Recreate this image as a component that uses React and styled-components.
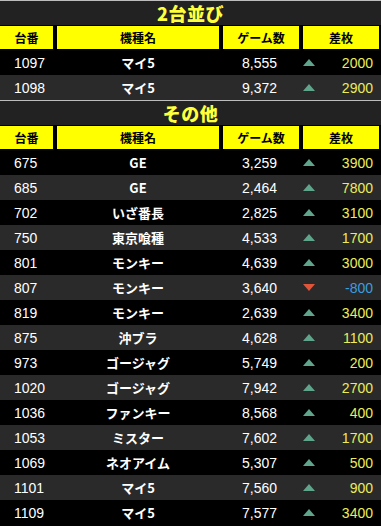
import React from "react";
import styled, { createGlobalStyle } from "styled-components";

const Global = createGlobalStyle`
  html, body {
    margin: 0;
    padding: 0;
    background: #000;
  }
  body {
    font-family: "Liberation Sans", "Noto Sans CJK JP", sans-serif;
  }
`;

const Board = styled.div`
  width: 381px;
  background: #000;
`;

const Title = styled.div`
  height: 25px;
  box-sizing: border-box;
  border-top: 1px solid #bdbdbd;
  background: #222;
  display: flex;
  align-items: center;
  justify-content: center;
  color: #ffff3c;
  font-family: "Noto Sans CJK JP", sans-serif;
  font-weight: 900;
  font-size: 18px;
  letter-spacing: 0.5px;
`;

const cols = "53px 162px 76px 76px";

const HeadRow = styled.div`
  display: grid;
  grid-template-columns: ${cols};
  column-gap: 4px;
  height: 25px;
  box-sizing: border-box;
  padding: 1px 0;
  background: #000;
`;

const HeadCell = styled.div`
  background: #ffff00;
  color: #000;
  display: flex;
  align-items: center;
  justify-content: center;
  font-family: "Noto Sans CJK JP", sans-serif;
  font-weight: 700;
  font-size: 12px;
`;

const Row = styled.div`
  display: grid;
  grid-template-columns: ${cols};
  column-gap: 4px;
  height: 25px;
  align-items: center;
  background: ${(p) => (p.$odd ? "#2a2a2a" : "#000")};
  color: #fff;
  font-size: 14px;
`;

const Num = styled.div`
  padding-left: 14px;
`;

const Name = styled.div`
  text-align: center;
  font-family: "Noto Sans CJK JP", sans-serif;
  font-weight: 700;
  font-size: 13px;
`;

const Games = styled.div`
  text-align: right;
  padding-right: 22px;
`;

const Diff = styled.div`
  display: flex;
  align-items: center;
  justify-content: space-between;
  padding: 0 6px 0 0;
  color: ${(p) => (p.$neg ? "#3a9ee0" : "#ecec5a")};
`;

const Arrow = ({ down }) =>
  down ? (
    <svg width="12" height="7" viewBox="0 0 12 7">
      <polygon points="0,0 12,0 6,7" fill="#e0553a" />
    </svg>
  ) : (
    <svg width="12" height="7" viewBox="0 0 12 7">
      <polygon points="0,7 12,7 6,0" fill="#5fa58c" />
    </svg>
  );

const sections = [
  {
    title: "2台並び",
    rows: [
      ["1097", "マイ5", "8,555", 2000],
      ["1098", "マイ5", "9,372", 2900],
    ],
  },
  {
    title: "その他",
    rows: [
      ["675", "GE", "3,259", 3900],
      ["685", "GE", "2,464", 7800],
      ["702", "いざ番長", "2,825", 3100],
      ["750", "東京喰種", "4,533", 1700],
      ["801", "モンキー", "4,639", 3000],
      ["807", "モンキー", "3,640", -800],
      ["819", "モンキー", "2,639", 3400],
      ["875", "沖ブラ", "4,628", 1100],
      ["973", "ゴージャグ", "5,749", 200],
      ["1020", "ゴージャグ", "7,942", 2700],
      ["1036", "ファンキー", "8,568", 400],
      ["1053", "ミスター", "7,602", 1700],
      ["1069", "ネオアイム", "5,307", 500],
      ["1101", "マイ5", "7,560", 900],
      ["1109", "マイ5", "7,577", 3400],
    ],
  },
];

export default function App() {
  return (
    <Board>
      <Global />
      {sections.map((s) => (
        <React.Fragment key={s.title}>
          <Title>{s.title}</Title>
          <HeadRow>
            <HeadCell>台番</HeadCell>
            <HeadCell>機種名</HeadCell>
            <HeadCell>ゲーム数</HeadCell>
            <HeadCell>差枚</HeadCell>
          </HeadRow>
          {s.rows.map((r, i) => (
            <Row key={r[0]} $odd={i % 2 === 1}>
              <Num>{r[0]}</Num>
              <Name>{r[1]}</Name>
              <Games>{r[2]}</Games>
              <Diff $neg={r[3] < 0}>
                <Arrow down={r[3] < 0} />
                <span>{r[3]}</span>
              </Diff>
            </Row>
          ))}
        </React.Fragment>
      ))}
    </Board>
  );
}
